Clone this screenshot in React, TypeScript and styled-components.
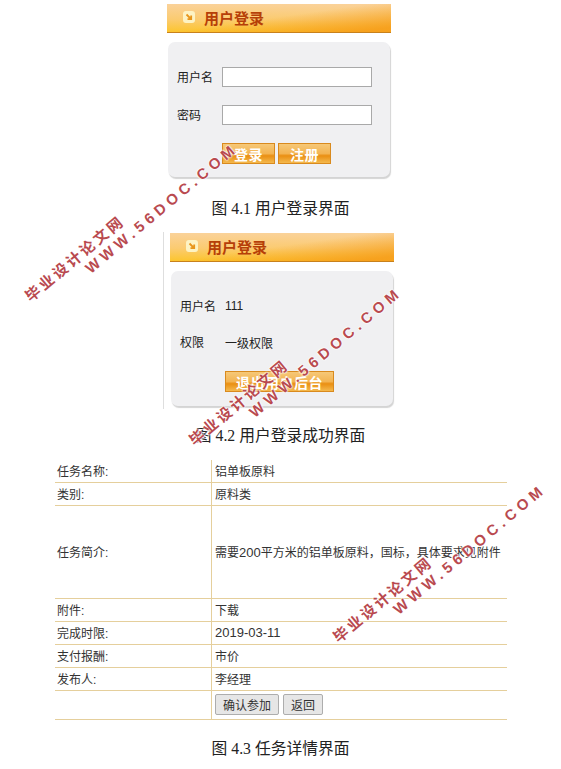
import React from 'react'
import styled, { createGlobalStyle } from 'styled-components'

const GlobalStyle = createGlobalStyle`
  html, body {
    margin: 0;
    background: #fff;
  }
  body {
    font-family: "Liberation Sans", "Noto Sans CJK SC", sans-serif;
    overflow: hidden;
  }
`

const PanelHeader = () => (
  <Header>
    <HeaderIcon width="12" height="12" viewBox="0 0 12 12">
      <rect x="0" y="0" width="12" height="12" rx="3" fill="#fdf3c4" />
      <path d="M3.5 3.5 L7.5 7.5 M8.2 4.5 V8.2 H4.5" stroke="#e8961c" strokeWidth="1.8" fill="none" />
    </HeaderIcon>
    用户登录
  </Header>
)

const Watermark = ({ x, y }: { x: number; y: number }) => (
  <Mark $x={x} $y={y}>
    <MarkTitle>毕业设计论文网</MarkTitle>
    <MarkUrl>WWW.56DOC.COM</MarkUrl>
  </Mark>
)

export default function App() {
  const rows = [
    { label: '任务名称:', value: <>铝单板原料</>, height: 22 },
    { label: '类别:', value: <>原料类</>, height: 22 },
    {
      label: '任务简介:',
      value: <>需要<Digits>200</Digits>{'平方米的铝单板原料\uFF0C国标\uFF0C具体要求见附件'}</>,
      height: 92,
    },
    { label: '附件:', value: <>下载</>, height: 22 },
    { label: '完成时限:', value: <Digits>2019-03-11</Digits>, height: 22 },
    { label: '支付报酬:', value: <>市价</>, height: 22 },
    { label: '发布人:', value: <>李经理</>, height: 22 },
  ]

  return (
    <Page>
      <GlobalStyle />

      <LoginBlock>
        <PanelHeader />
        <Card>
          <FormRow>
            <FieldLabel>用户名</FieldLabel>
            <TextInput />
          </FormRow>
          <FormRow>
            <FieldLabel>密码</FieldLabel>
            <TextInput />
          </FormRow>
          <ButtonRow>
            <OrangeButton $width={53}>登录</OrangeButton>
            <OrangeButton $width={53}>注册</OrangeButton>
          </ButtonRow>
        </Card>
      </LoginBlock>
      <Caption $top={20} $bottom={11}>图 4.1 用户登录界面</Caption>

      <SuccessFrame>
        <PanelHeader />
        <Card>
          <InfoRow>
            <FieldLabel>用户名</FieldLabel>
            <span>111</span>
          </InfoRow>
          <InfoRow>
            <FieldLabel>权限</FieldLabel>
            <span>一级权限</span>
          </InfoRow>
          <ButtonRow>
            <OrangeButton $width={109}>退出用户后台</OrangeButton>
          </ButtonRow>
        </Card>
      </SuccessFrame>
      <Caption $top={15} $bottom={12}>图 4.2 用户登录成功界面</Caption>

      <DetailTable>
        <tbody>
          {rows.map((row) => (
            <tr key={row.label}>
              <LabelCell $height={row.height}>{row.label}</LabelCell>
              <ValueCell>{row.value}</ValueCell>
            </tr>
          ))}
          <tr>
            <LabelCell $height={28} />
            <ValueCell>
              <GreyButton>确认参加</GreyButton>
              <GreyButton>返回</GreyButton>
            </ValueCell>
          </tr>
        </tbody>
      </DetailTable>
      <Caption $top={17} $bottom={0}>图 4.3 任务详情界面</Caption>

      <Watermark x={43} y={285} />
      <Watermark x={207} y={429} />
      <Watermark x={351} y={626} />
    </Page>
  )
}

const Page = styled.div`
  position: relative;
  width: 561px;
  height: 769px;
  overflow: hidden;
  padding-top: 4px;
  box-sizing: border-box;
  color: #222;
`

const LoginBlock = styled.div`
  width: 224px;
  margin-left: 167px;
`

const SuccessFrame = styled.div`
  width: 224px;
  margin-left: 163px;
  padding: 1px 0 3px 6px;
  border-left: 1px solid #dedede;
`

const Header = styled.div`
  height: 29px;
  display: flex;
  align-items: center;
  gap: 9px;
  padding: 0 0 2px 16px;
  box-sizing: border-box;
  border-bottom: 1px solid #c8811c;
  background:
    linear-gradient(172deg, transparent 48%, rgba(246, 155, 25, 0.85) 92%),
    linear-gradient(180deg, #fad29a 0%, #fbcb70 55%, #fcc52e 100%);
  color: #b63f08;
  font-size: 15px;
  font-weight: 700;
`

const HeaderIcon = styled.svg`
  flex: none;
`

const Card = styled.div`
  height: 135px;
  width: 222px;
  margin: 9px 0 0 1px;
  padding-top: 25px;
  box-sizing: border-box;
  background: #f0f0f2;
  border-radius: 7px;
  box-shadow: 1px 2px 1px #d4d4d4;
  font-size: 12px;
`

const FormRow = styled.div`
  display: flex;
  align-items: center;
  height: 20px;
  margin-bottom: 18px;
  padding-left: 9px;
`

const InfoRow = styled.div`
  display: flex;
  align-items: center;
  height: 20px;
  margin-bottom: 16px;
  padding-left: 9px;
  &:nth-child(2) {
    margin-bottom: 19px;
  }
`

const FieldLabel = styled.span`
  width: 45px;
  flex: none;
  padding-bottom: 2px;
`

const TextInput = styled.input`
  width: 150px;
  height: 20px;
  padding: 0;
  box-sizing: border-box;
  background: #fff;
  border: 1px solid #a9a9a9;
`

const ButtonRow = styled.div`
  display: flex;
  gap: 3px;
  padding-left: 54px;
`

const OrangeButton = styled.button<{ $width: number }>`
  width: ${(p) => p.$width}px;
  height: 21px;
  padding: 0;
  border: 1px solid #d98a1e;
  background: linear-gradient(180deg, #f6c878 0%, #f3b452 50%, #ea8f12 62%, #f4b94e 100%);
  color: #fff;
  font-family: inherit;
  font-size: 14px;
  font-weight: 700;
  letter-spacing: 0.5px;
  white-space: nowrap;
`

const Caption = styled.div<{ $top: number; $bottom: number }>`
  height: 24px;
  margin: ${(p) => p.$top}px 0 ${(p) => p.$bottom}px;
  text-align: center;
  line-height: 24px;
  font-family: "Liberation Serif", "Noto Sans CJK SC", serif;
  font-size: 15.75px;
  color: #222;
`

const DetailTable = styled.table`
  width: 452px;
  margin-left: 55px;
  border-collapse: collapse;
  font-size: 12px;
  color: #333;
`

const LabelCell = styled.td<{ $height: number }>`
  width: 154px;
  height: ${(p) => p.$height - 2}px;
  padding: 0 0 2px 2px;
  border-bottom: 1px solid #e5cf9c;
  border-right: 1px solid #e5cf9c;
`

const ValueCell = styled.td`
  padding: 0 0 2px 3px;
  border-bottom: 1px solid #e5cf9c;
  white-space: nowrap;
`

const Digits = styled.span`
  font-size: 13px;
`

const GreyButton = styled.button`
  height: 21px;
  padding: 0 7px;
  margin-right: 4px;
  border: 1px solid #adadad;
  border-radius: 2px;
  background: #e6e6e6;
  color: #333;
  font-family: inherit;
  font-size: 12px;
  vertical-align: middle;
`

const Mark = styled.div<{ $x: number; $y: number }>`
  position: absolute;
  left: ${(p) => p.$x}px;
  top: ${(p) => p.$y}px;
  width: 200px;
  transform: rotate(-40deg);
  transform-origin: 0 100%;
  color: #b94a4f;
  font-weight: 700;
  line-height: 1;
  white-space: nowrap;
  text-shadow: 0 0 2px #fff, 0 0 2px #fff, 0 0 2px #fff;
  pointer-events: none;
`

const MarkTitle = styled.div`
  font-size: 15px;
  letter-spacing: 2.7px;
  height: 17px;
`

const MarkUrl = styled.div`
  margin-left: 64px;
  font-family: "Liberation Sans", sans-serif;
  font-size: 15px;
  letter-spacing: 4.5px;
`
